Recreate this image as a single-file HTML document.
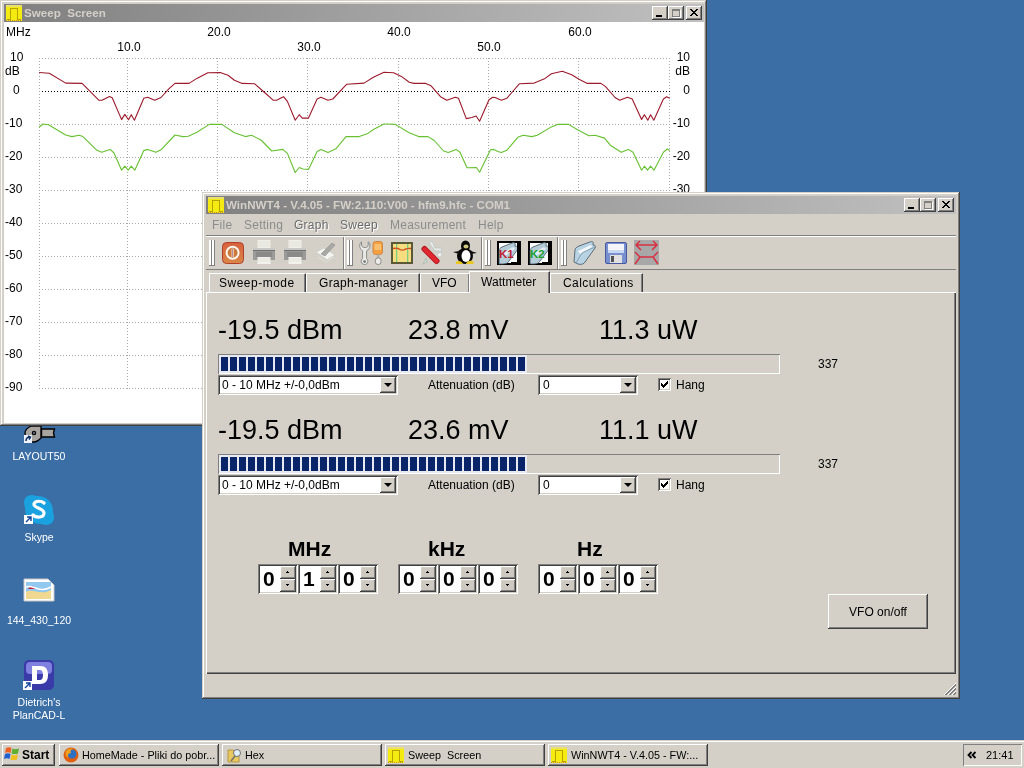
<!DOCTYPE html><html><head><meta charset="utf-8"><style>
*{box-sizing:border-box}
html,body{margin:0;padding:0}
body{width:1024px;height:768px;overflow:hidden;position:relative;background:#3a6ea5;font-family:"Liberation Sans", sans-serif;}
.a{position:absolute}
.t{position:absolute;white-space:nowrap;line-height:1;color:#000;will-change:transform}
.win{position:absolute;background:#d4d0c8;box-shadow:inset -1px -1px #404040,inset 1px 1px #d4d0c8,inset -2px -2px #808080,inset 2px 2px #fff}
.cap{position:absolute;height:18px;background:linear-gradient(to right,#808080,#c0c0c0)}
.cbtn{position:absolute;width:16px;height:14px;background:#d4d0c8;box-shadow:inset -1px -1px #404040,inset 1px 1px #fff,inset -2px -2px #808080}
.raised{background:#d4d0c8;box-shadow:inset -1px -1px #404040,inset 1px 1px #fff,inset -2px -2px #808080,inset 2px 2px #d4d0c8}
.sunken{background:#fff;box-shadow:inset 1px 1px #808080,inset -1px -1px #fff,inset 2px 2px #404040,inset -2px -2px #d4d0c8}
</style></head><body><svg class="a" style="left:22px;top:424px" width="36" height="22" viewBox="0 0 36 22"><path d="M9 2 L19 2 L19 14 C17 16 15 18 12 18 L9 18 C5 17 3 13 3 9 C3 6 5 4 9 2Z" fill="#a8a4a0" stroke="#000" stroke-width="1.3"/><circle cx="12" cy="9" r="1.7" fill="#606878" stroke="#000" stroke-width="1.1"/><path d="M19.5 5 H32.5 L31.5 9 L32.5 13 H19.5 Z" fill="#a8a4a0" stroke="#000" stroke-width="1.4"/><rect x="2" y="11" width="8" height="8" fill="#f0f4ff"/><path d="M4 17 C4 14 5 13 8 13 M6 12 L8.5 13 L7 15.5" stroke="#103060" stroke-width="1.5" fill="none"/></svg>
<div class="t" style="left:-21px;width:120px;text-align:center;top:451.11px;font-size:10.5px;color:#fff">LAYOUT50</div>
<svg class="a" style="left:22px;top:493px" width="34" height="34" viewBox="0 0 34 34"><path d="M10 2 C5 2 2 5 2 10 C2 12 3 13 3 15 C3 25 9 31 19 31 C21 31 22 32 24 32 C29 32 32 29 32 24 C32 22 31 21 31 19 C31 9 25 3 15 3 C13 3 12 2 10 2Z" fill="#1aa2e0"/><path d="M22 10 C20 8 13 7 12 11 C11 15 22 15 22 20 C22 25 14 25 11 22" fill="none" stroke="#fff" stroke-width="3.2" stroke-linecap="round"/><rect x="2" y="22" width="9" height="9" fill="#fff"/><path d="M4 29 L9 24 M5 24 H9 V28" stroke="#1040a0" stroke-width="1.4" fill="none"/></svg>
<div class="t" style="left:-21px;width:120px;text-align:center;top:532.11px;font-size:10.5px;color:#fff">Skype</div>
<svg class="a" style="left:23px;top:578px" width="32" height="24" viewBox="0 0 32 24"><path d="M1 1 H25 L31 7 V23 H1 Z" fill="#fff" stroke="#c8c8c8"/><rect x="3" y="4" width="25" height="17" fill="#90c8f0"/><path d="M3 14 C10 10 18 18 28 12 V21 H3Z" fill="#f0d890"/><path d="M5 11 C8 6 12 9 13 11 Z" fill="#c02040"/><path d="M3 9 C10 6 16 16 28 9" stroke="#fff" stroke-width="1.5" fill="none"/></svg>
<div class="t" style="left:-21px;width:120px;text-align:center;top:615.11px;font-size:10.5px;color:#fff">144_430_120</div>
<svg class="a" style="left:23px;top:659px" width="32" height="32" viewBox="0 0 32 32"><rect x="1" y="1" width="30" height="30" rx="5" fill="#3a3aa8"/><rect x="3" y="3" width="26" height="12" rx="4" fill="#8080e0"/><path d="M9 7 H17 C24 7 25 12 25 16 C25 21 23 25 17 25 H9 Z M14 11 V21 H17 C19 21 20 19 20 16 C20 13 19 11 17 11 Z" fill="#fff" fill-rule="evenodd"/><rect x="0" y="22" width="9" height="9" fill="#fff"/><path d="M2 29 L7 24 M3 24 H7 V28" stroke="#1040a0" stroke-width="1.4" fill="none"/></svg>
<div class="t" style="left:-21px;width:120px;text-align:center;top:697.11px;font-size:10.5px;color:#fff">Dietrich's</div>
<div class="t" style="left:-21px;width:120px;text-align:center;top:710.11px;font-size:10.5px;color:#fff">PlanCAD-L</div>
<div class="win" style="left:0;top:0;width:707px;height:426px"></div>
<div class="cap" style="left:4px;top:4px;width:700px"></div>
<svg class="a" style="left:6px;top:5px" width="16" height="16" viewBox="0 0 16 16" shape-rendering="crispEdges"><rect width="16" height="16" fill="#f4ec10"/><rect x="0" y="0" width="16" height="2" fill="#e8e070"/><path d="M1 14.5 H4.5 V3.5 H11.5 V14.5 H15" fill="none" stroke="#b8a000" stroke-width="1"/><path d="M0 15.5 H16" stroke="#d09020" stroke-width="1" stroke-dasharray="1 1"/></svg>
<div class="t" style="left:24px;top:7.18px;font-size:11.6px;font-weight:bold;color:#d4d0c8">Sweep&nbsp;&nbsp;Screen</div>
<div class="cbtn" style="left:652px;top:6px"><div class="a" style="left:4px;top:9px;width:6px;height:2px;background:#000"></div></div>
<div class="cbtn" style="left:668px;top:6px"><div class="a" style="left:4px;top:3px;width:8px;height:8px;border:1px solid #808080;border-top-width:2px;box-shadow:1px 1px #fff"></div></div>
<div class="cbtn" style="left:686px;top:6px"><svg class="a" style="left:4px;top:3px" width="8" height="7" viewBox="0 0 8 7" shape-rendering="crispEdges"><path d="M0 0h2v1h-2zM6 0h2v1h-2zM1 1h2v1h-2zM5 1h2v1h-2zM2 2h4v1h-4zM3 3h2v1h-2zM2 4h4v1h-4zM1 5h2v1h-2zM5 5h2v1h-2zM0 6h2v1h-2zM6 6h2v1h-2z" fill="#000"/></svg></div>
<div class="a" style="left:4px;top:22px;width:700px;height:401px;background:#fff"></div>
<svg class="a" style="left:0;top:0" width="707" height="426" shape-rendering="crispEdges"><line x1="39.5" y1="58" x2="39.5" y2="389" stroke="#a8a8a8" stroke-dasharray="1 2"/><line x1="127.5" y1="58" x2="127.5" y2="389" stroke="#a8a8a8" stroke-dasharray="1 2"/><line x1="217.5" y1="58" x2="217.5" y2="389" stroke="#a8a8a8" stroke-dasharray="1 2"/><line x1="307.5" y1="58" x2="307.5" y2="389" stroke="#a8a8a8" stroke-dasharray="1 2"/><line x1="398.5" y1="58" x2="398.5" y2="389" stroke="#a8a8a8" stroke-dasharray="1 2"/><line x1="488.5" y1="58" x2="488.5" y2="389" stroke="#a8a8a8" stroke-dasharray="1 2"/><line x1="578.5" y1="58" x2="578.5" y2="389" stroke="#a8a8a8" stroke-dasharray="1 2"/><line x1="669.5" y1="58" x2="669.5" y2="389" stroke="#a8a8a8" stroke-dasharray="1 2"/><line x1="39" y1="58.5" x2="670" y2="58.5" stroke="#a8a8a8" stroke-dasharray="1 2"/><line x1="42" y1="91.5" x2="670" y2="91.5" stroke="#000" stroke-dasharray="1 2"/><line x1="39" y1="124.5" x2="670" y2="124.5" stroke="#a8a8a8" stroke-dasharray="1 2"/><line x1="39" y1="157.5" x2="670" y2="157.5" stroke="#a8a8a8" stroke-dasharray="1 2"/><line x1="39" y1="190.5" x2="670" y2="190.5" stroke="#a8a8a8" stroke-dasharray="1 2"/><line x1="39" y1="223.5" x2="670" y2="223.5" stroke="#a8a8a8" stroke-dasharray="1 2"/><line x1="39" y1="256.5" x2="670" y2="256.5" stroke="#a8a8a8" stroke-dasharray="1 2"/><line x1="39" y1="289.5" x2="670" y2="289.5" stroke="#a8a8a8" stroke-dasharray="1 2"/><line x1="39" y1="322.5" x2="670" y2="322.5" stroke="#a8a8a8" stroke-dasharray="1 2"/><line x1="39" y1="355.5" x2="670" y2="355.5" stroke="#a8a8a8" stroke-dasharray="1 2"/><line x1="39" y1="388.5" x2="670" y2="388.5" stroke="#a8a8a8" stroke-dasharray="1 2"/><polyline points="39.1,72.5 49.3,73.3 65.7,83.1 82.1,83.4 99.0,100.3 102.0,100.3 109.5,96.5 112.2,97.8 121.6,119.6 124.8,114.4 128.5,119.8 131.3,114.7 134.4,120.2 143.8,98.3 147.7,97.2 154.7,100.3 161.0,97.5 168.8,88.9 175.0,83.4 189.0,83.4 196.9,78.4 207.8,72.8 220.3,72.5 228.0,75.3 234.4,80.3 242.2,83.4 254.7,83.8 264.0,92.0 273.4,100.3 276.5,100.3 283.5,96.7 287.4,101.4 295.2,120.2 299.2,114.7 302.3,118.1 308.5,118.1 317.1,99.0 321.0,97.2 328.0,100.3 332.8,99.0 346.8,84.2 364.0,83.1 373.4,77.2 384.0,72.2 393.6,72.8 401.4,76.4 409.2,82.2 414.0,83.4 425.7,83.4 431.1,85.8 440.5,96.7 446.8,100.3 455.3,97.2 458.5,98.3 466.3,118.6 471.8,117.5 476.1,116.0 479.6,121.2 489.0,99.8 492.8,97.2 495.1,97.5 501.4,100.3 506.8,98.3 512.3,92.0 519.3,83.8 534.2,83.1 545.1,78.4 551.4,73.8 562.3,71.2 571.7,74.8 579.5,79.5 587.3,83.4 600.9,83.4 605.6,86.6 615.0,97.5 619.7,100.3 627.5,97.2 632.2,99.0 641.6,119.4 644.4,114.7 647.8,120.2 650.6,114.7 653.8,120.2 663.4,99.0 666.6,96.7 669.7,98.3" fill="none" stroke="#9c1a2c" stroke-width="1.1" shape-rendering="geometricPrecision" stroke-linejoin="round"/><polyline points="39.1,127.2 43.0,124.0 48.5,124.8 65.7,135.0 72.0,136.6 79.0,135.3 82.9,136.6 97.0,150.3 101.6,152.2 110.2,149.4 114.0,153.0 121.6,170.2 124.8,166.2 128.2,170.2 131.3,166.2 134.8,170.2 143.8,150.6 147.7,149.4 155.9,152.2 161.0,149.8 175.0,135.0 182.8,136.6 188.3,136.2 196.9,132.2 209.4,124.4 221.9,124.4 234.4,132.7 245.3,136.6 251.6,135.3 261.0,140.0 271.8,151.0 282.8,149.4 287.4,153.4 295.2,172.5 299.2,167.5 303.0,169.0 308.5,169.4 317.1,151.4 321.0,149.4 328.0,152.5 335.9,148.8 346.0,136.6 359.3,136.6 367.9,133.4 373.4,129.5 384.0,124.0 387.4,124.0 395.2,124.4 409.2,132.7 418.6,136.6 428.0,136.6 434.2,140.5 443.6,151.0 448.3,152.5 456.1,149.4 460.0,152.2 467.0,167.8 476.4,167.5 479.6,172.2 490.5,149.8 493.6,149.4 498.0,151.4 501.4,152.5 506.8,150.3 517.8,137.3 523.2,135.3 531.8,136.6 537.3,135.3 551.4,126.9 557.6,124.4 568.6,124.4 577.2,129.5 588.9,135.8 595.1,135.3 604.5,138.1 610.3,145.2 621.2,152.2 628.3,149.4 633.0,152.2 641.6,170.2 644.4,166.2 647.5,170.2 650.6,166.2 654.0,170.2 663.4,152.2 667.3,149.0 669.7,150.6" fill="none" stroke="#66c030" stroke-width="1.1" shape-rendering="geometricPrecision" stroke-linejoin="round"/></svg>
<div class="t" style="left:6px;top:25.84px;font-size:12px;">MHz</div>
<div class="t" style="left:99px;width:60px;text-align:center;top:40.84px;font-size:12px">10.0</div>
<div class="t" style="left:189px;width:60px;text-align:center;top:25.84px;font-size:12px">20.0</div>
<div class="t" style="left:279px;width:60px;text-align:center;top:40.84px;font-size:12px">30.0</div>
<div class="t" style="left:369px;width:60px;text-align:center;top:25.84px;font-size:12px">40.0</div>
<div class="t" style="left:459px;width:60px;text-align:center;top:40.84px;font-size:12px">50.0</div>
<div class="t" style="left:550px;width:60px;text-align:center;top:25.84px;font-size:12px">60.0</div>
<div class="t" style="left:10px;top:50.84px;font-size:12px;">10</div>
<div class="t" style="left:5px;top:64.84px;font-size:12px;">dB</div>
<div class="t" style="left:13px;top:83.84px;font-size:12px;">0</div>
<div class="t" style="left:5px;top:116.84px;font-size:12px;">-10</div>
<div class="t" style="left:5px;top:149.84px;font-size:12px;">-20</div>
<div class="t" style="left:5px;top:182.84px;font-size:12px;">-30</div>
<div class="t" style="left:5px;top:215.84px;font-size:12px;">-40</div>
<div class="t" style="left:5px;top:248.84px;font-size:12px;">-50</div>
<div class="t" style="left:5px;top:281.84px;font-size:12px;">-60</div>
<div class="t" style="left:5px;top:314.84px;font-size:12px;">-70</div>
<div class="t" style="left:5px;top:347.84px;font-size:12px;">-80</div>
<div class="t" style="left:5px;top:380.84px;font-size:12px;">-90</div>
<div class="t" style="left:650px;width:40px;text-align:right;top:50.84px;font-size:12px">10</div>
<div class="t" style="left:650px;width:40px;text-align:right;top:64.84px;font-size:12px">dB</div>
<div class="t" style="left:650px;width:40px;text-align:right;top:83.84px;font-size:12px">0</div>
<div class="t" style="left:650px;width:40px;text-align:right;top:116.84px;font-size:12px">-10</div>
<div class="t" style="left:650px;width:40px;text-align:right;top:149.84px;font-size:12px">-20</div>
<div class="t" style="left:650px;width:40px;text-align:right;top:182.84px;font-size:12px">-30</div>
<div class="t" style="left:650px;width:40px;text-align:right;top:215.84px;font-size:12px">-40</div>
<div class="t" style="left:650px;width:40px;text-align:right;top:248.84px;font-size:12px">-50</div>
<div class="t" style="left:650px;width:40px;text-align:right;top:281.84px;font-size:12px">-60</div>
<div class="t" style="left:650px;width:40px;text-align:right;top:314.84px;font-size:12px">-70</div>
<div class="t" style="left:650px;width:40px;text-align:right;top:347.84px;font-size:12px">-80</div>
<div class="t" style="left:650px;width:40px;text-align:right;top:380.84px;font-size:12px">-90</div>
<div class="win" style="left:202px;top:192px;width:758px;height:507px"></div>
<div class="cap" style="left:206px;top:196px;width:750px"></div>
<svg class="a" style="left:208px;top:197px" width="16" height="16" viewBox="0 0 16 16" shape-rendering="crispEdges"><rect width="16" height="16" fill="#f4ec10"/><rect x="0" y="0" width="16" height="2" fill="#e8e070"/><path d="M1 14.5 H4.5 V3.5 H11.5 V14.5 H15" fill="none" stroke="#b8a000" stroke-width="1"/><path d="M0 15.5 H16" stroke="#d09020" stroke-width="1" stroke-dasharray="1 1"/></svg>
<div class="t" style="left:226px;top:199.18px;font-size:11.6px;font-weight:bold;color:#d4d0c8">WinNWT4 - V.4.05 - FW:2.110:V00 - hfm9.hfc - COM1</div>
<div class="cbtn" style="left:904px;top:198px"><div class="a" style="left:4px;top:9px;width:6px;height:2px;background:#000"></div></div>
<div class="cbtn" style="left:920px;top:198px"><div class="a" style="left:4px;top:3px;width:8px;height:8px;border:1px solid #808080;border-top-width:2px;box-shadow:1px 1px #fff"></div></div>
<div class="cbtn" style="left:938px;top:198px"><svg class="a" style="left:4px;top:3px" width="8" height="7" viewBox="0 0 8 7" shape-rendering="crispEdges"><path d="M0 0h2v1h-2zM6 0h2v1h-2zM1 1h2v1h-2zM5 1h2v1h-2zM2 2h4v1h-4zM3 3h2v1h-2zM2 4h4v1h-4zM1 5h2v1h-2zM5 5h2v1h-2zM0 6h2v1h-2zM6 6h2v1h-2z" fill="#000"/></svg></div>
<div class="t" style="left:212px;top:218.84px;font-size:12px;color:#8c8c8c;letter-spacing:0.25px">File</div>
<div class="t" style="left:243.5px;top:218.84px;font-size:12px;color:#8c8c8c;letter-spacing:0.25px">Setting</div>
<div class="t" style="left:294px;top:218.84px;font-size:12px;color:#6c6c6c;text-shadow:1px 1px #fff;letter-spacing:0.25px">Graph</div>
<div class="t" style="left:340px;top:218.84px;font-size:12px;color:#6c6c6c;text-shadow:1px 1px #fff;letter-spacing:0.25px">Sweep</div>
<div class="t" style="left:389.5px;top:218.84px;font-size:12px;color:#8c8c8c;letter-spacing:0.25px">Measurement</div>
<div class="t" style="left:477.5px;top:218.84px;font-size:12px;color:#8c8c8c;letter-spacing:0.25px">Help</div>
<div class="a" style="left:206px;top:235px;width:750px;height:1px;background:#808080"></div>
<div class="a" style="left:206px;top:236px;width:750px;height:1px;background:#fff"></div>
<div class="a" style="left:206px;top:269px;width:750px;height:1px;background:#808080"></div>
<div class="a" style="left:343px;top:237px;width:1px;height:32px;background:#808080"></div>
<div class="a" style="left:344px;top:237px;width:1px;height:32px;background:#fff"></div>
<div class="a" style="left:481px;top:237px;width:1px;height:32px;background:#808080"></div>
<div class="a" style="left:482px;top:237px;width:1px;height:32px;background:#fff"></div>
<div class="a" style="left:557px;top:237px;width:1px;height:32px;background:#808080"></div>
<div class="a" style="left:558px;top:237px;width:1px;height:32px;background:#fff"></div>
<div class="a" style="left:209px;top:240px;width:3px;height:26px;background:#fff;box-shadow:inset -1px -1px #808080"></div>
<div class="a" style="left:212px;top:240px;width:3px;height:26px;background:#fff;box-shadow:inset -1px -1px #808080"></div>
<div class="a" style="left:347px;top:240px;width:3px;height:26px;background:#fff;box-shadow:inset -1px -1px #808080"></div>
<div class="a" style="left:350px;top:240px;width:3px;height:26px;background:#fff;box-shadow:inset -1px -1px #808080"></div>
<div class="a" style="left:485px;top:240px;width:3px;height:26px;background:#fff;box-shadow:inset -1px -1px #808080"></div>
<div class="a" style="left:488px;top:240px;width:3px;height:26px;background:#fff;box-shadow:inset -1px -1px #808080"></div>
<div class="a" style="left:561px;top:240px;width:3px;height:26px;background:#fff;box-shadow:inset -1px -1px #808080"></div>
<div class="a" style="left:564px;top:240px;width:3px;height:26px;background:#fff;box-shadow:inset -1px -1px #808080"></div>
<svg class="a" style="left:222px;top:242px" width="22" height="22" viewBox="0 0 22 22"><defs><linearGradient id="pw" x1="0" y1="0" x2="0" y2="1"><stop offset="0" stop-color="#d8603c"/><stop offset="1" stop-color="#d88848"/></linearGradient></defs><rect x="0.5" y="0.5" width="21" height="21" rx="4" fill="url(#pw)" stroke="#b0402c"/><circle cx="10.6" cy="10.8" r="6" fill="#cc7a3c" stroke="#fff8f0" stroke-width="2"/><rect x="9.6" y="6.5" width="2" height="8.5" fill="#fff4e8"/><rect x="10.2" y="6.5" width="0.8" height="8.5" fill="#a07080"/></svg>
<svg class="a" style="left:253px;top:240px" width="22" height="24" viewBox="0 0 22 24"><rect x="4.5" y="0" width="13" height="8" fill="#f0efe8"/><path d="M5 2h12M5 4h12M5 6h12" stroke="#dcdcd4" stroke-width="0.6"/><rect x="0" y="8" width="22" height="12" fill="#9a9a98"/><rect x="0" y="8" width="22" height="2" fill="#c8c8c4"/><rect x="0" y="10" width="22" height="1" fill="#707070"/><rect x="3" y="12" width="16" height="5" fill="#8a8a88"/><rect x="4.5" y="17" width="13" height="7" fill="#f2f2ec"/><path d="M5 19h12M5 21h12" stroke="#dcdcd4" stroke-width="0.6"/></svg>
<svg class="a" style="left:284px;top:240px" width="22" height="24" viewBox="0 0 22 24"><rect x="4.5" y="0" width="13" height="8" fill="#f0efe8"/><path d="M5 2h12M5 4h12M5 6h12" stroke="#dcdcd4" stroke-width="0.6"/><rect x="0" y="8" width="22" height="12" fill="#9a9a98"/><rect x="0" y="8" width="22" height="2" fill="#c8c8c4"/><rect x="0" y="10" width="22" height="1" fill="#707070"/><rect x="3" y="12" width="16" height="5" fill="#8a8a88"/><rect x="4.5" y="17" width="13" height="7" fill="#f2f2ec"/><path d="M5 19h12M5 21h12" stroke="#dcdcd4" stroke-width="0.6"/></svg>
<svg class="a" style="left:315px;top:241px" width="21" height="22" viewBox="0 0 21 22"><path d="M1 11 L9 7 L20 14 L12 19 Z" fill="#f4f4f0" stroke="#d0d0c8"/><path d="M6 13 L17 2 L20 4 L10 15 Z" fill="#a8a8a4" stroke="#909090" stroke-width="0.6"/><path d="M3 16 L11 21 L19 16" fill="none" stroke="#e0e0d8"/></svg>
<svg class="a" style="left:359px;top:241px" width="24" height="24" viewBox="0 0 24 24"><path d="M2.5 0.8 C0.8 2 0.3 4.5 1 6.5 C1.6 8.2 2.6 9.2 3.6 9.8 L3.6 17.5 C1.6 18.6 1.4 23.5 5.6 23.5 C9.6 23.5 9.4 18.6 7.6 17.5 L7.6 9.8 C9.4 9 11 7 11 4.2 C11 2.6 10.3 1.3 9.2 0.8 L9.2 4 C9.2 5.6 8 6.6 6.2 6.6 C4.3 6.6 2.5 5.6 2.5 4 Z" fill="#e8e8e4" stroke="#8c8c8a" stroke-width="1"/><circle cx="5.6" cy="20.6" r="1.4" fill="#787878"/><rect x="14" y="0.5" width="9.5" height="13" rx="2.5" fill="#f4a040" stroke="#d08848"/><rect x="15.5" y="3" width="6.5" height="6" rx="1" fill="#f8c070"/><rect x="18" y="13.5" width="2.4" height="4" fill="#b0b0b0"/><ellipse cx="19.2" cy="20.2" rx="3" ry="3.4" fill="#ececea" stroke="#8c8c8a" stroke-width="1"/></svg>
<svg class="a" style="left:391px;top:242px" width="22" height="22" viewBox="0 0 22 22"><rect x="1" y="1" width="20" height="20" fill="#f8dc80" stroke="#5a5a38" stroke-width="2"/><rect x="5" y="2" width="1.3" height="18" fill="#78d080"/><rect x="16" y="2" width="1.3" height="18" fill="#78d080"/><path d="M2 6.5 C5 6 7 6 9 7.5 C11 9 13 8 15 6.8 C17 6 19 6.5 20 6.5" fill="none" stroke="#d05020" stroke-width="1.4"/></svg>
<svg class="a" style="left:421px;top:240px" width="23" height="25" viewBox="0 0 23 25"><path d="M8 3 L11 1 L14 8 L20 8 L21 11 L14 11 Z" fill="#e8e8e8" stroke="#b8c8c0" stroke-width="0.8"/><path d="M16 14 L20 12 L21 16 L17 17Z" fill="#f0f0f0" stroke="#c0c0c0" stroke-width="0.6"/><path d="M5 18 L2 24 L6 22 Z" fill="#d0e0d8" stroke="#a0b0a8" stroke-width="0.6"/><path d="M3.5 9 L15.5 21" stroke="#b01820" stroke-width="6" stroke-linecap="round"/><path d="M3.5 9 L15.5 21" stroke="#e02830" stroke-width="4" stroke-linecap="round"/></svg>
<svg class="a" style="left:452px;top:240px" width="25" height="25" viewBox="0 0 25 25"><ellipse cx="13" cy="16" rx="8" ry="8" fill="#080808"/><ellipse cx="13.5" cy="6" rx="4.5" ry="5.5" fill="#080808"/><path d="M1 12 L7 11 L7 14 Z M25 13 L19 11 L19 14 Z" fill="#101010"/><ellipse cx="14" cy="16" rx="4.5" ry="6" fill="#fff"/><ellipse cx="14" cy="6.5" rx="2.5" ry="2" fill="#d0c880"/><path d="M4 22 C6 20 10 21 11 24 L4 24 Z M14 24 C15 20 20 20 22 22 L21 24 Z" fill="#e8c820"/></svg>
<svg class="a" style="left:497px;top:241px" width="24" height="24" viewBox="0 0 24 24"><rect x="0" y="0" width="24" height="24" fill="#000"/><rect x="2" y="2" width="19" height="20" fill="#fff"/><path d="M2 21 L2 10 C2 8 3 7 5 6 L15 2 C17 1 19 2 18 4 L18 5 C20 5 22 6 21 8 L12 20 C11 22 9 23 6 23 L2 23Z" fill="#b4ccd8" stroke="#405060" stroke-width="0.8"/><path d="M5 12 L16 6 L18 8 L8 15Z" fill="#e4eef4"/><rect x="20" y="2" width="4" height="19" fill="#000"/><rect x="14" y="21" width="10" height="3" fill="#000"/><text x="2" y="17" font-family="Liberation Sans" font-weight="bold" font-size="11.5" fill="#c02030">K1</text></svg>
<svg class="a" style="left:528px;top:241px" width="24" height="24" viewBox="0 0 24 24"><rect x="0" y="0" width="24" height="24" fill="#000"/><rect x="2" y="2" width="19" height="20" fill="#fff"/><path d="M2 21 L2 10 C2 8 3 7 5 6 L15 2 C17 1 19 2 18 4 L18 5 C20 5 22 6 21 8 L12 20 C11 22 9 23 6 23 L2 23Z" fill="#b4ccd8" stroke="#405060" stroke-width="0.8"/><path d="M5 12 L16 6 L18 8 L8 15Z" fill="#e4eef4"/><rect x="20" y="2" width="4" height="19" fill="#000"/><rect x="14" y="21" width="10" height="3" fill="#000"/><text x="2" y="17" font-family="Liberation Sans" font-weight="bold" font-size="11.5" fill="#20a030">K2</text></svg>
<svg class="a" style="left:573px;top:241px" width="24" height="24" viewBox="0 0 24 24"><path d="M1 21 L2 9 C2 7 4 6 6 5 L17 1 C19 0 21 1 20 3 L20 4 C22 4 23 5 22 7 L12 21 C11 23 8 24 5 23 Z" fill="#b8d4e4" stroke="#50606c" stroke-width="0.9"/><path d="M5 10 L18 4 L19 6 L7 13 Z" fill="#f4f8fc"/><path d="M3 22 L9 12 L22 6" fill="none" stroke="#7890a0" stroke-width="0.8"/></svg>
<svg class="a" style="left:605px;top:242px" width="22" height="22" viewBox="0 0 22 22"><rect x="0.5" y="0.5" width="21" height="21" rx="1.5" fill="#7890d0" stroke="#4858a0"/><rect x="3" y="2" width="16" height="9" fill="#f4f4f8"/><rect x="3" y="8" width="16" height="3" fill="#c8d8f0"/><rect x="5" y="13" width="12" height="8" fill="#e0e0e0"/><rect x="6" y="14" width="3" height="6" fill="#505050"/></svg>
<svg class="a" style="left:634px;top:240px" width="25" height="25" viewBox="0 0 25 25"><rect x="0" y="0" width="25" height="25" fill="#a8a8a8"/><path d="M6 1 L2 5 L7 10 M19 1 L23 5 L18 10 M3 5 H22" fill="none" stroke="#d83040" stroke-width="1.5"/><path d="M1 12 L6 17 L1 24 M24 12 L19 17 L24 24 M6 17 H19" fill="none" stroke="#d83040" stroke-width="1.5"/></svg>
<div class="a" style="left:206px;top:292px;width:750px;height:382px;box-shadow:inset 1px 1px #fff,inset -1px -1px #404040,inset -2px -2px #808080"></div>
<div class="a" style="left:209px;top:273px;width:97px;height:19px;background:#d4d0c8;border-left:1px solid #fff;border-top:1px solid #fff;border-right:1px solid #404040;box-shadow:inset -1px 0 #808080"></div>
<div class="t" style="left:219px;top:276.84px;font-size:12px;letter-spacing:0.5px">Sweep-mode</div>
<div class="a" style="left:306px;top:273px;width:114px;height:19px;background:#d4d0c8;border-left:1px solid #fff;border-top:1px solid #fff;border-right:1px solid #404040;box-shadow:inset -1px 0 #808080"></div>
<div class="t" style="left:319px;top:276.84px;font-size:12px;letter-spacing:0.33px">Graph-manager</div>
<div class="a" style="left:420px;top:273px;width:50px;height:19px;background:#d4d0c8;border-left:1px solid #fff;border-top:1px solid #fff;border-right:1px solid #404040;box-shadow:inset -1px 0 #808080"></div>
<div class="t" style="left:432px;top:276.84px;font-size:12px;letter-spacing:0px">VFO</div>
<div class="a" style="left:469px;top:271px;width:81px;height:22px;background:#d4d0c8;border-left:1px solid #fff;border-top:1px solid #fff;border-right:1px solid #404040;box-shadow:inset -1px 0 #808080"></div>
<div class="t" style="left:481px;top:275.84px;font-size:12px;letter-spacing:0.05px">Wattmeter</div>
<div class="a" style="left:550px;top:273px;width:93px;height:19px;background:#d4d0c8;border-left:1px solid #fff;border-top:1px solid #fff;border-right:1px solid #404040;box-shadow:inset -1px 0 #808080"></div>
<div class="t" style="left:563px;top:276.84px;font-size:12px;letter-spacing:0.45px">Calculations</div>
<div class="t" style="left:218px;top:317.14px;font-size:27px;">-19.5 dBm</div>
<div class="t" style="left:408px;top:317.14px;font-size:27px;">23.8 mV</div>
<div class="t" style="left:599px;top:317.14px;font-size:27px;">11.3 uW</div>
<div class="a" style="left:218px;top:354px;width:562px;height:20px;box-shadow:inset 1px 1px #808080,inset -1px -1px #fff"></div>
<div class="a" style="left:219px;top:355px;width:308px;height:18px;background:#e6e8f2"></div>
<div class="a" style="left:221px;top:357px;width:304px;height:14px;background:repeating-linear-gradient(to right,#0a246a 0 7px,transparent 7px 9px)"></div>
<div class="t" style="left:818px;top:357.84px;font-size:12px;">337</div>
<div class="a sunken" style="left:218px;top:375px;width:180px;height:20px"></div>
<div class="t" style="left:222px;top:378.84px;font-size:12px;">0 - 10 MHz +/-0,0dBm</div>
<div class="a raised" style="left:380px;top:377px;width:16px;height:16px"><div class="a" style="left:4px;top:6px;width:0;height:0;border-left:4px solid transparent;border-right:4px solid transparent;border-top:4px solid #000"></div></div>
<div class="t" style="left:428px;top:378.84px;font-size:12px;">Attenuation (dB)</div>
<div class="a sunken" style="left:538px;top:375px;width:100px;height:20px"></div>
<div class="t" style="left:543px;top:378.84px;font-size:12px;">0</div>
<div class="a raised" style="left:620px;top:377px;width:16px;height:16px"><div class="a" style="left:4px;top:6px;width:0;height:0;border-left:4px solid transparent;border-right:4px solid transparent;border-top:4px solid #000"></div></div>
<div class="a sunken" style="left:658px;top:378px;width:13px;height:13px"><svg class="a" style="left:3px;top:3px" width="7" height="7" viewBox="0 0 7 7" shape-rendering="crispEdges"><path d="M6 0h1v3h-1zM5 1h1v3h-1zM4 2h1v3h-1zM3 3h1v3h-1zM2 4h1v3h-1zM1 3h1v3h-1zM0 2h1v3h-1z" fill="#000"/></svg></div>
<div class="t" style="left:676px;top:378.84px;font-size:12px;">Hang</div>
<div class="t" style="left:218px;top:417.14px;font-size:27px;">-19.5 dBm</div>
<div class="t" style="left:408px;top:417.14px;font-size:27px;">23.6 mV</div>
<div class="t" style="left:599px;top:417.14px;font-size:27px;">11.1 uW</div>
<div class="a" style="left:218px;top:454px;width:562px;height:20px;box-shadow:inset 1px 1px #808080,inset -1px -1px #fff"></div>
<div class="a" style="left:219px;top:455px;width:308px;height:18px;background:#e6e8f2"></div>
<div class="a" style="left:221px;top:457px;width:304px;height:14px;background:repeating-linear-gradient(to right,#0a246a 0 7px,transparent 7px 9px)"></div>
<div class="t" style="left:818px;top:457.84px;font-size:12px;">337</div>
<div class="a sunken" style="left:218px;top:475px;width:180px;height:20px"></div>
<div class="t" style="left:222px;top:478.84px;font-size:12px;">0 - 10 MHz +/-0,0dBm</div>
<div class="a raised" style="left:380px;top:477px;width:16px;height:16px"><div class="a" style="left:4px;top:6px;width:0;height:0;border-left:4px solid transparent;border-right:4px solid transparent;border-top:4px solid #000"></div></div>
<div class="t" style="left:428px;top:478.84px;font-size:12px;">Attenuation (dB)</div>
<div class="a sunken" style="left:538px;top:475px;width:100px;height:20px"></div>
<div class="t" style="left:543px;top:478.84px;font-size:12px;">0</div>
<div class="a raised" style="left:620px;top:477px;width:16px;height:16px"><div class="a" style="left:4px;top:6px;width:0;height:0;border-left:4px solid transparent;border-right:4px solid transparent;border-top:4px solid #000"></div></div>
<div class="a sunken" style="left:658px;top:478px;width:13px;height:13px"><svg class="a" style="left:3px;top:3px" width="7" height="7" viewBox="0 0 7 7" shape-rendering="crispEdges"><path d="M6 0h1v3h-1zM5 1h1v3h-1zM4 2h1v3h-1zM3 3h1v3h-1zM2 4h1v3h-1zM1 3h1v3h-1zM0 2h1v3h-1z" fill="#000"/></svg></div>
<div class="t" style="left:676px;top:478.84px;font-size:12px;">Hang</div>
<div class="t" style="left:288px;top:538.22px;font-size:21px;font-weight:bold">MHz</div>
<div class="a sunken" style="left:258px;top:564px;width:40px;height:30px"></div>
<div class="t" style="left:263px;top:568.22px;font-size:21px;font-weight:bold">0</div>
<div class="a raised" style="left:280px;top:566px;width:16px;height:13px;background:#cdc9c1"><svg class="a" style="left:6px;top:5px" width="3" height="2" shape-rendering="crispEdges"><path d="M1 0h1v1h-1zM0 1h3v1h-3z" fill="#000"/></svg></div>
<div class="a raised" style="left:280px;top:579px;width:16px;height:13px;background:#cdc9c1"><svg class="a" style="left:6px;top:5px" width="3" height="2" shape-rendering="crispEdges"><path d="M0 0h3v1h-3zM1 1h1v1h-1z" fill="#000"/></svg></div>
<div class="a sunken" style="left:298px;top:564px;width:40px;height:30px"></div>
<div class="t" style="left:303px;top:568.22px;font-size:21px;font-weight:bold">1</div>
<div class="a raised" style="left:320px;top:566px;width:16px;height:13px;background:#cdc9c1"><svg class="a" style="left:6px;top:5px" width="3" height="2" shape-rendering="crispEdges"><path d="M1 0h1v1h-1zM0 1h3v1h-3z" fill="#000"/></svg></div>
<div class="a raised" style="left:320px;top:579px;width:16px;height:13px;background:#cdc9c1"><svg class="a" style="left:6px;top:5px" width="3" height="2" shape-rendering="crispEdges"><path d="M0 0h3v1h-3zM1 1h1v1h-1z" fill="#000"/></svg></div>
<div class="a sunken" style="left:338px;top:564px;width:40px;height:30px"></div>
<div class="t" style="left:343px;top:568.22px;font-size:21px;font-weight:bold">0</div>
<div class="a raised" style="left:360px;top:566px;width:16px;height:13px;background:#cdc9c1"><svg class="a" style="left:6px;top:5px" width="3" height="2" shape-rendering="crispEdges"><path d="M1 0h1v1h-1zM0 1h3v1h-3z" fill="#000"/></svg></div>
<div class="a raised" style="left:360px;top:579px;width:16px;height:13px;background:#cdc9c1"><svg class="a" style="left:6px;top:5px" width="3" height="2" shape-rendering="crispEdges"><path d="M0 0h3v1h-3zM1 1h1v1h-1z" fill="#000"/></svg></div>
<div class="t" style="left:428px;top:538.22px;font-size:21px;font-weight:bold">kHz</div>
<div class="a sunken" style="left:398px;top:564px;width:40px;height:30px"></div>
<div class="t" style="left:403px;top:568.22px;font-size:21px;font-weight:bold">0</div>
<div class="a raised" style="left:420px;top:566px;width:16px;height:13px;background:#cdc9c1"><svg class="a" style="left:6px;top:5px" width="3" height="2" shape-rendering="crispEdges"><path d="M1 0h1v1h-1zM0 1h3v1h-3z" fill="#000"/></svg></div>
<div class="a raised" style="left:420px;top:579px;width:16px;height:13px;background:#cdc9c1"><svg class="a" style="left:6px;top:5px" width="3" height="2" shape-rendering="crispEdges"><path d="M0 0h3v1h-3zM1 1h1v1h-1z" fill="#000"/></svg></div>
<div class="a sunken" style="left:438px;top:564px;width:40px;height:30px"></div>
<div class="t" style="left:443px;top:568.22px;font-size:21px;font-weight:bold">0</div>
<div class="a raised" style="left:460px;top:566px;width:16px;height:13px;background:#cdc9c1"><svg class="a" style="left:6px;top:5px" width="3" height="2" shape-rendering="crispEdges"><path d="M1 0h1v1h-1zM0 1h3v1h-3z" fill="#000"/></svg></div>
<div class="a raised" style="left:460px;top:579px;width:16px;height:13px;background:#cdc9c1"><svg class="a" style="left:6px;top:5px" width="3" height="2" shape-rendering="crispEdges"><path d="M0 0h3v1h-3zM1 1h1v1h-1z" fill="#000"/></svg></div>
<div class="a sunken" style="left:478px;top:564px;width:40px;height:30px"></div>
<div class="t" style="left:483px;top:568.22px;font-size:21px;font-weight:bold">0</div>
<div class="a raised" style="left:500px;top:566px;width:16px;height:13px;background:#cdc9c1"><svg class="a" style="left:6px;top:5px" width="3" height="2" shape-rendering="crispEdges"><path d="M1 0h1v1h-1zM0 1h3v1h-3z" fill="#000"/></svg></div>
<div class="a raised" style="left:500px;top:579px;width:16px;height:13px;background:#cdc9c1"><svg class="a" style="left:6px;top:5px" width="3" height="2" shape-rendering="crispEdges"><path d="M0 0h3v1h-3zM1 1h1v1h-1z" fill="#000"/></svg></div>
<div class="t" style="left:577px;top:538.22px;font-size:21px;font-weight:bold">Hz</div>
<div class="a sunken" style="left:538px;top:564px;width:40px;height:30px"></div>
<div class="t" style="left:543px;top:568.22px;font-size:21px;font-weight:bold">0</div>
<div class="a raised" style="left:560px;top:566px;width:16px;height:13px;background:#cdc9c1"><svg class="a" style="left:6px;top:5px" width="3" height="2" shape-rendering="crispEdges"><path d="M1 0h1v1h-1zM0 1h3v1h-3z" fill="#000"/></svg></div>
<div class="a raised" style="left:560px;top:579px;width:16px;height:13px;background:#cdc9c1"><svg class="a" style="left:6px;top:5px" width="3" height="2" shape-rendering="crispEdges"><path d="M0 0h3v1h-3zM1 1h1v1h-1z" fill="#000"/></svg></div>
<div class="a sunken" style="left:578px;top:564px;width:40px;height:30px"></div>
<div class="t" style="left:583px;top:568.22px;font-size:21px;font-weight:bold">0</div>
<div class="a raised" style="left:600px;top:566px;width:16px;height:13px;background:#cdc9c1"><svg class="a" style="left:6px;top:5px" width="3" height="2" shape-rendering="crispEdges"><path d="M1 0h1v1h-1zM0 1h3v1h-3z" fill="#000"/></svg></div>
<div class="a raised" style="left:600px;top:579px;width:16px;height:13px;background:#cdc9c1"><svg class="a" style="left:6px;top:5px" width="3" height="2" shape-rendering="crispEdges"><path d="M0 0h3v1h-3zM1 1h1v1h-1z" fill="#000"/></svg></div>
<div class="a sunken" style="left:618px;top:564px;width:40px;height:30px"></div>
<div class="t" style="left:623px;top:568.22px;font-size:21px;font-weight:bold">0</div>
<div class="a raised" style="left:640px;top:566px;width:16px;height:13px;background:#cdc9c1"><svg class="a" style="left:6px;top:5px" width="3" height="2" shape-rendering="crispEdges"><path d="M1 0h1v1h-1zM0 1h3v1h-3z" fill="#000"/></svg></div>
<div class="a raised" style="left:640px;top:579px;width:16px;height:13px;background:#cdc9c1"><svg class="a" style="left:6px;top:5px" width="3" height="2" shape-rendering="crispEdges"><path d="M0 0h3v1h-3zM1 1h1v1h-1z" fill="#000"/></svg></div>
<div class="a raised" style="left:828px;top:594px;width:100px;height:35px"></div>
<div class="t" style="left:828px;width:100px;text-align:center;top:605.84px;font-size:12px">VFO on/off</div>
<svg class="a" style="left:944px;top:683px" width="12" height="12" shape-rendering="crispEdges"><rect x="0" y="11" width="1" height="1" fill="#fff"/><rect x="1" y="10" width="1" height="1" fill="#fff"/><rect x="2" y="9" width="1" height="1" fill="#fff"/><rect x="3" y="8" width="1" height="1" fill="#fff"/><rect x="4" y="7" width="1" height="1" fill="#fff"/><rect x="5" y="6" width="1" height="1" fill="#fff"/><rect x="6" y="5" width="1" height="1" fill="#fff"/><rect x="7" y="4" width="1" height="1" fill="#fff"/><rect x="8" y="3" width="1" height="1" fill="#fff"/><rect x="9" y="2" width="1" height="1" fill="#fff"/><rect x="10" y="1" width="1" height="1" fill="#fff"/><rect x="11" y="0" width="1" height="1" fill="#fff"/><rect x="1" y="11" width="1" height="1" fill="#808080"/><rect x="2" y="10" width="1" height="1" fill="#808080"/><rect x="3" y="9" width="1" height="1" fill="#808080"/><rect x="4" y="8" width="1" height="1" fill="#808080"/><rect x="5" y="7" width="1" height="1" fill="#808080"/><rect x="6" y="6" width="1" height="1" fill="#808080"/><rect x="7" y="5" width="1" height="1" fill="#808080"/><rect x="8" y="4" width="1" height="1" fill="#808080"/><rect x="9" y="3" width="1" height="1" fill="#808080"/><rect x="10" y="2" width="1" height="1" fill="#808080"/><rect x="11" y="1" width="1" height="1" fill="#808080"/><rect x="2" y="11" width="1" height="1" fill="#808080"/><rect x="3" y="10" width="1" height="1" fill="#808080"/><rect x="4" y="9" width="1" height="1" fill="#808080"/><rect x="5" y="8" width="1" height="1" fill="#808080"/><rect x="6" y="7" width="1" height="1" fill="#808080"/><rect x="7" y="6" width="1" height="1" fill="#808080"/><rect x="8" y="5" width="1" height="1" fill="#808080"/><rect x="9" y="4" width="1" height="1" fill="#808080"/><rect x="10" y="3" width="1" height="1" fill="#808080"/><rect x="11" y="2" width="1" height="1" fill="#808080"/><rect x="4" y="11" width="1" height="1" fill="#fff"/><rect x="5" y="10" width="1" height="1" fill="#fff"/><rect x="6" y="9" width="1" height="1" fill="#fff"/><rect x="7" y="8" width="1" height="1" fill="#fff"/><rect x="8" y="7" width="1" height="1" fill="#fff"/><rect x="9" y="6" width="1" height="1" fill="#fff"/><rect x="10" y="5" width="1" height="1" fill="#fff"/><rect x="11" y="4" width="1" height="1" fill="#fff"/><rect x="5" y="11" width="1" height="1" fill="#808080"/><rect x="6" y="10" width="1" height="1" fill="#808080"/><rect x="7" y="9" width="1" height="1" fill="#808080"/><rect x="8" y="8" width="1" height="1" fill="#808080"/><rect x="9" y="7" width="1" height="1" fill="#808080"/><rect x="10" y="6" width="1" height="1" fill="#808080"/><rect x="11" y="5" width="1" height="1" fill="#808080"/><rect x="6" y="11" width="1" height="1" fill="#808080"/><rect x="7" y="10" width="1" height="1" fill="#808080"/><rect x="8" y="9" width="1" height="1" fill="#808080"/><rect x="9" y="8" width="1" height="1" fill="#808080"/><rect x="10" y="7" width="1" height="1" fill="#808080"/><rect x="11" y="6" width="1" height="1" fill="#808080"/><rect x="8" y="11" width="1" height="1" fill="#fff"/><rect x="9" y="10" width="1" height="1" fill="#fff"/><rect x="10" y="9" width="1" height="1" fill="#fff"/><rect x="11" y="8" width="1" height="1" fill="#fff"/><rect x="9" y="11" width="1" height="1" fill="#808080"/><rect x="10" y="10" width="1" height="1" fill="#808080"/><rect x="11" y="9" width="1" height="1" fill="#808080"/><rect x="10" y="11" width="1" height="1" fill="#808080"/><rect x="11" y="10" width="1" height="1" fill="#808080"/></svg>
<div class="a" style="left:0;top:740px;width:1024px;height:28px;background:#d4d0c8;box-shadow:inset 0 1px #d4d0c8,inset 0 2px #fff"></div>
<div class="a raised" style="left:2px;top:744px;width:53px;height:22px"></div>
<svg class="a" style="left:4px;top:746px" width="16" height="15" viewBox="0 0 16 15"><path d="M2 2 C4 1 6 1 7.5 2 L6.5 7 C5 6 3 6 1 7Z" fill="#f06020"/><path d="M8.5 2.5 C10 3.5 12 3.5 15 2.5 L14 7.5 C11 8.5 9 8 7.5 7.5Z" fill="#60b030"/><path d="M1 8 C3 7 5 7 6.5 8 L5.5 13 C4 12 2 12 0 13Z" fill="#2060d0"/><path d="M7.5 8.5 C9 9.5 11 9.5 14 8.5 L13 13.5 C10 14.5 8 14 6.5 13.5Z" fill="#f0c020"/></svg>
<div class="t" style="left:22px;top:748.84px;font-size:12px;font-weight:bold">Start</div>
<div class="a raised" style="left:59px;top:744px;width:160px;height:22px"></div>
<svg class="a" style="left:63px;top:747px" width="16" height="16" viewBox="0 0 16 16"><circle cx="8" cy="8" r="7.5" fill="#e06010"/><circle cx="9" cy="7" r="4.5" fill="#3070c0"/><path d="M3 4 C5 1 9 1 11 2 C8 2 7 4 8 6 C5 6 4 9 6 11 C3 10 2 7 3 4Z" fill="#f0a020"/></svg>
<div class="t" style="left:82px;top:749.69px;font-size:11px;font-size:10.8px">HomeMade - Pliki do pobr...</div>
<div class="a raised" style="left:222px;top:744px;width:160px;height:22px"></div>
<svg class="a" style="left:227px;top:747px" width="16" height="16" viewBox="0 0 16 16"><path d="M1 3 H6 L7 4 H12 V15 H1Z" fill="#e8c860" stroke="#b08830" stroke-width="0.8"/><circle cx="10" cy="6" r="3.5" fill="#e0f0ff" stroke="#707070"/><path d="M8 9 L4 14" stroke="#707070" stroke-width="1.5"/></svg>
<div class="t" style="left:245px;top:749.69px;font-size:11px;font-size:10.8px">Hex</div>
<div class="a raised" style="left:385px;top:744px;width:160px;height:22px"></div>
<svg class="a" style="left:388px;top:747px" width="16" height="16" viewBox="0 0 16 16" shape-rendering="crispEdges"><rect width="16" height="16" fill="#f4ec10"/><rect x="0" y="0" width="16" height="2" fill="#e8e070"/><path d="M1 14.5 H4.5 V3.5 H11.5 V14.5 H15" fill="none" stroke="#b8a000" stroke-width="1"/><path d="M0 15.5 H16" stroke="#d09020" stroke-width="1" stroke-dasharray="1 1"/></svg>
<div class="t" style="left:408px;top:749.69px;font-size:11px;font-size:10.8px">Sweep&nbsp;&nbsp;Screen</div>
<div class="a raised" style="left:548px;top:744px;width:160px;height:22px"></div>
<svg class="a" style="left:551px;top:747px" width="16" height="16" viewBox="0 0 16 16" shape-rendering="crispEdges"><rect width="16" height="16" fill="#f4ec10"/><rect x="0" y="0" width="16" height="2" fill="#e8e070"/><path d="M1 14.5 H4.5 V3.5 H11.5 V14.5 H15" fill="none" stroke="#b8a000" stroke-width="1"/><path d="M0 15.5 H16" stroke="#d09020" stroke-width="1" stroke-dasharray="1 1"/></svg>
<div class="t" style="left:571px;top:749.69px;font-size:11px;font-size:10.8px">WinNWT4 - V.4.05 - FW:...</div>
<div class="a" style="left:963px;top:744px;width:59px;height:22px;box-shadow:inset 1px 1px #808080,inset -1px -1px #fff"></div>
<svg class="a" style="left:967px;top:751px" width="10" height="8" viewBox="0 0 10 8"><path d="M4.5 1 L1.5 4 L4.5 7 M8.5 1 L5.5 4 L8.5 7" fill="none" stroke="#000" stroke-width="1.8"/></svg>
<div class="t" style="left:986px;top:749.69px;font-size:11px;">21:41</div></body></html>
